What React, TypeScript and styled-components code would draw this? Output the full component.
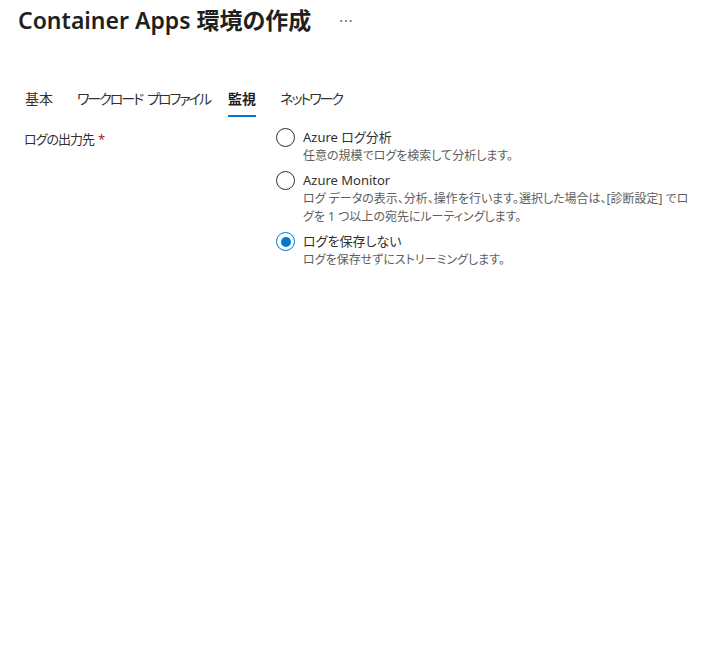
import React, { useState } from "react";
import styled, { createGlobalStyle } from "styled-components";

const GlobalStyle = createGlobalStyle`
  body {
    margin: 0;
    background: #fff;
    font-family: "Noto Sans", "Noto Sans CJK JP", sans-serif;
    font-feature-settings: "palt";
    color: #323130;
  }
`;

const Page = styled.div`
  width: 720px;
  min-height: 667px;
  box-sizing: border-box;
`;

const Header = styled.div`
  display: flex;
  align-items: center;
  gap: 28px;
  padding: 1px 0 0 18px;
  height: 36px;
`;

const Title = styled.h1`
  margin: 0;
  font-size: 23px;
  font-weight: 600;
  color: #201f1e;
`;

const More = styled.span`
  font-size: 14px;
  color: #605e5c;
  letter-spacing: 1px;
  padding-top: 2px;
`;

const Tabs = styled.div`
  display: flex;
  gap: 24px;
  padding-left: 25px;
  margin-top: 53px;
`;

const Tab = styled.div<{ $active?: boolean; $kana?: boolean }>`
  font-size: 14px;
  line-height: 18px;
  padding-bottom: 7px;
  letter-spacing: ${(p) => (p.$kana ? "-2px" : "0")};
  word-spacing: ${(p) => (p.$kana ? "3px" : "0")};
  margin-right: ${(p) => (p.$kana ? "-6px" : "0")};
  font-weight: ${(p) => (p.$active ? 700 : 400)};
  color: ${(p) => (p.$active ? "#201f1e" : "#323130")};
  border-bottom: 2px solid ${(p) => (p.$active ? "#0078d4" : "transparent")};
  cursor: pointer;
`;

const Form = styled.div`
  display: grid;
  grid-template-columns: 252px 1fr;
  padding: 0 22px 0 24px;
  margin-top: 8px;
`;

const Label = styled.div`
  font-size: 13px;
  line-height: 18px;
  padding-top: 5px;
  letter-spacing: -1px;
`;

const Required = styled.span`
  color: #a4262c;
  margin-left: 4px;
`;

const Options = styled.div`
  display: flex;
  flex-direction: column;
  gap: 6px;
  padding-top: 3px;
`;

const Option = styled.label`
  display: flex;
  align-items: flex-start;
  gap: 8px;
  cursor: pointer;
`;

const Circle = styled.span<{ $checked?: boolean }>`
  flex: none;
  width: 19px;
  height: 19px;
  border-radius: 50%;
  box-sizing: border-box;
  border: 1px solid ${(p) => (p.$checked ? "#0078d4" : "#323130")};
  display: flex;
  align-items: center;
  justify-content: center;

  &::after {
    content: "";
    width: 10px;
    height: 10px;
    border-radius: 50%;
    background: ${(p) => (p.$checked ? "#0078d4" : "transparent")};
  }
`;

const OptionText = styled.div`
  display: flex;
  flex-direction: column;
`;

const OptionTitle = styled.div`
  font-size: 13px;
  line-height: 19px;
  color: #323130;
`;

const OptionDesc = styled.div`
  font-size: 12px;
  line-height: 18px;
  color: #605e5c;
`;

const tabs = [
  { label: "基本", kana: false },
  { label: "ワークロード プロファイル", kana: true },
  { label: "監視", kana: false },
  { label: "ネットワーク", kana: true },
];

const options = [
  { title: "Azure ログ分析", desc: "任意の規模でログを検索して分析します。" },
  {
    title: "Azure Monitor",
    desc: "ログ データの表示、分析、操作を行います。選択した場合は、[診断設定] でログを 1 つ以上の宛先にルーティングします。",
  },
  { title: "ログを保存しない", desc: "ログを保存せずにストリーミングします。" },
];

const App: React.FC = () => {
  const [selected, setSelected] = useState(2);

  return (
    <Page>
      <GlobalStyle />
      <Header>
        <Title>Container Apps 環境の作成</Title>
        <More>···</More>
      </Header>
      <Tabs>
        {tabs.map((t) => (
          <Tab key={t.label} $kana={t.kana} $active={t.label === "監視"}>
            {t.label}
          </Tab>
        ))}
      </Tabs>
      <Form>
        <Label>
          ログの出力先<Required>*</Required>
        </Label>
        <Options>
          {options.map((o, i) => (
            <Option key={o.title} onClick={() => setSelected(i)}>
              <Circle $checked={selected === i} />
              <OptionText>
                <OptionTitle>{o.title}</OptionTitle>
                <OptionDesc>{o.desc}</OptionDesc>
              </OptionText>
            </Option>
          ))}
        </Options>
      </Form>
    </Page>
  );
};

export default App;
